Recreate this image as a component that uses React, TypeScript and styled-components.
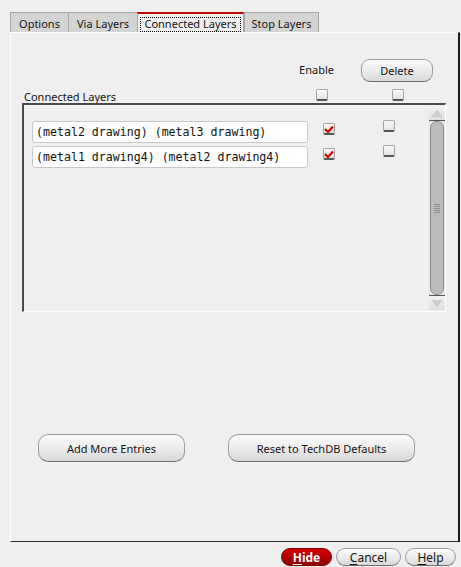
import React from "react";
import styled, { createGlobalStyle } from "styled-components";

const Global = createGlobalStyle`
  html, body { margin: 0; padding: 0; background: #efefef; }
  * { box-sizing: border-box; }
  body { font-family: "Noto Sans", "Open Sans", sans-serif; font-size: 11px; color: #151515; }
`;

const Window = styled.div`
  width: 461px;
  height: 567px;
  background: #efefef;
  display: flex;
  flex-direction: column;
  overflow: hidden;
`;

const TabBar = styled.div`
  display: flex;
  padding: 12px 0 0 10px;
  height: 32px;
`;

const Tab = styled.div<{ $active?: boolean; $w: number; $last?: boolean }>`
  width: ${(p) => p.$w}px;
  height: 20px;
  display: flex;
  align-items: center;
  justify-content: center;
  background: ${(p) => (p.$active ? "#efefef" : "#d4d4d4")};
  border-top: ${(p) => (p.$active ? "2px solid #c40000" : "1px solid #a6a6a6")};
  border-left: 1px solid #a6a6a6;
  border-right: ${(p) => (p.$active || p.$last ? "1px solid #a6a6a6" : "none")};
  line-height: 14px;
  white-space: nowrap;
`;

const TabText = styled.span<{ $focus?: boolean }>`
  padding: 0 3px;
  height: 15px;
  display: flex;
  align-items: center;
  border: 1px ${(p) => (p.$focus ? "dotted #000" : "solid transparent")};
  margin-top: ${(p) => (p.$focus ? "2px" : "3px")};
`;

const Panel = styled.div`
  width: 450px;
  margin-left: 10px;
  height: 510px;
  border-top: 1px solid #ffffff;
  border-left: 1px solid #ffffff;
  border-right: 2px solid #1c1c1c;
  border-bottom: 1px solid #2a2a2a;
  display: flex;
  flex-direction: column;
`;

const HeaderRow = styled.div`
  margin-top: 26px;
  height: 23px;
  display: flex;
  justify-content: flex-end;
  align-items: center;
  padding-right: 25px;
  gap: 27px;
`;

const ColumnLabel = styled.span`
  line-height: 14px;
  margin-top: -2px;
`;

const Button = styled.button<{ $w: number; $h?: number }>`
  width: ${(p) => p.$w}px;
  height: ${(p) => p.$h ?? 23}px;
  border-radius: 9px;
  border: 1px solid #9e9e9e;
  border-bottom-color: #6f6f6f;
  background: linear-gradient(#fbfbfb, #ececec 50%, #d8d8d8);
  font-family: "Noto Sans", "Open Sans", sans-serif;
  font-size: 11px;
  color: #151515;
  padding: 0;
  display: flex;
  align-items: center;
  justify-content: center;
`;

const LabelRow = styled.div`
  margin-top: 6px;
  height: 15px;
  display: flex;
  align-items: flex-start;
  padding-left: 13px;
`;

const Label = styled.span`
  flex: 1;
  line-height: 14px;
  margin-top: 2px;
`;

const Box = styled.span<{ $ml: number; $mt?: number; $mr?: number }>`
  width: 12px;
  height: 12px;
  margin-left: ${(p) => p.$ml}px;
  margin-top: ${(p) => p.$mt ?? 0}px;
  margin-right: ${(p) => p.$mr ?? 0}px;
  flex: none;
  border: 1px solid #a4a4a4;
  border-bottom: 2px solid #555;
  border-radius: 2px;
  background: linear-gradient(#fafafa, #e2e2e2);
  display: flex;
  align-items: center;
  justify-content: center;
`;

const List = styled.div`
  margin-left: 11px;
  width: 424px;
  height: 209px;
  border-top: 2px solid #4a4a4a;
  border-left: 2px solid #4a4a4a;
  border-right: 1px solid #ffffff;
  border-bottom: 1px solid #ffffff;
  display: flex;
`;

const Entries = styled.div`
  flex: 1;
  padding: 16px 0 0 8px;
  display: flex;
  flex-direction: column;
  gap: 3px;
`;

const EntryRow = styled.div`
  display: flex;
  align-items: flex-start;
`;

const Field = styled.div`
  width: 276px;
  height: 22px;
  background: #ffffff;
  border: 1px solid #c8c8c8;
  border-radius: 3px;
  padding-left: 3px;
  display: flex;
  align-items: center;
  font-family: "DejaVu Sans Mono", "Liberation Mono", monospace;
  font-size: 11.6px;
  color: #111;
  white-space: pre;
`;

const Scrollbar = styled.div`
  width: 16px;
  margin: 1px 0 1px 0;
  display: flex;
  flex-direction: column;
  background: #e4e4e4;
`;

const Arrow = styled.div<{ $down?: boolean }>`
  height: 15px;
  flex: none;
  background: linear-gradient(#f2f2f2, #dedede);
  border-bottom: ${(p) => (p.$down ? "none" : "1px solid #555")};
  border-top: ${(p) => (p.$down ? "1px solid #555" : "none")};
  display: flex;
  align-items: center;
  justify-content: center;
`;

const Handle = styled.div`
  flex: 1;
  margin: 0 1px;
  border: 1px solid #8a8a8a;
  border-radius: 7px;
  background: #bcbcbc;
  display: flex;
  align-items: center;
  justify-content: center;
`;

const Grip = styled.div`
  width: 6px;
  height: 9px;
  background: repeating-linear-gradient(#8c8c8c 0 1px, transparent 1px 2px);
`;

const ActionRow = styled.div`
  margin-top: 122px;
  padding-left: 27px;
  display: flex;
  gap: 43px;
`;

const BigButton = styled(Button)`
  height: 28px;
  border-radius: 10px;
`;

const Footer = styled.div`
  margin-top: 6px;
  display: flex;
  justify-content: flex-end;
  padding-right: 5px;
  gap: 4px;
`;

const FootButton = styled(Button)<{ $primary?: boolean }>`
  height: 18px;
  border-radius: 9px;
  font-size: 12px;
  ${(p) =>
    p.$primary
      ? `background: linear-gradient(#d40000, #b00000 55%, #8e0000);
         border-color: #7a0000;
         color: #ffffff;
         font-weight: bold;`
      : ""}
  u { text-decoration: underline; text-underline-offset: 2px; }
`;

const Check = () => (
  <svg width="10" height="8" viewBox="0 0 10 8">
    <path d="M1 4 L4 7 L9 1.5" stroke="#d00000" strokeWidth="2.2" fill="none" />
  </svg>
);

const Tri = ({ down }: { down?: boolean }) => (
  <svg width="10" height="7" viewBox="0 0 10 7">
    <path d={down ? "M0 0 H10 L5 7 Z" : "M0 7 H10 L5 0 Z"} fill="#cfcfcf" stroke="#bdbdbd" strokeWidth="0.5" />
  </svg>
);

const entries = [
  { text: "(metal2 drawing) (metal3 drawing)", enabled: true },
  { text: "(metal1 drawing4) (metal2 drawing4)", enabled: true },
];

export default function App() {
  return (
    <Window>
      <Global />
      <TabBar>
        <Tab $w={58}><TabText>Options</TabText></Tab>
        <Tab $w={69}><TabText>Via Layers</TabText></Tab>
        <Tab $w={107} $active><TabText $focus>Connected Layers</TabText></Tab>
        <Tab $w={75} $last><TabText>Stop Layers</TabText></Tab>
      </TabBar>
      <Panel>
        <HeaderRow>
          <ColumnLabel>Enable</ColumnLabel>
          <Button $w={72}>Delete</Button>
        </HeaderRow>
        <LabelRow>
          <Label>Connected Layers</Label>
          <Box $ml={0} $mt={1} />
          <Box $ml={64} $mt={1} $mr={54} />
        </LabelRow>
        <List>
          <Entries>
            {entries.map((e) => (
              <EntryRow key={e.text}>
                <Field>{e.text}</Field>
                <Box $ml={15} $mt={2}>{e.enabled && <Check />}</Box>
                <Box $ml={48} $mt={-1} />
              </EntryRow>
            ))}
          </Entries>
          <Scrollbar>
            <Arrow><Tri /></Arrow>
            <Handle><Grip /></Handle>
            <Arrow $down><Tri down /></Arrow>
          </Scrollbar>
        </List>
        <ActionRow>
          <BigButton $w={147}>Add More Entries</BigButton>
          <BigButton $w={187}>Reset to TechDB Defaults</BigButton>
        </ActionRow>
      </Panel>
      <Footer>
        <FootButton $w={51} $primary><span><u>H</u>ide</span></FootButton>
        <FootButton $w={65}><span><u>C</u>ancel</span></FootButton>
        <FootButton $w={51}><span><u>H</u>elp</span></FootButton>
      </Footer>
    </Window>
  );
}
